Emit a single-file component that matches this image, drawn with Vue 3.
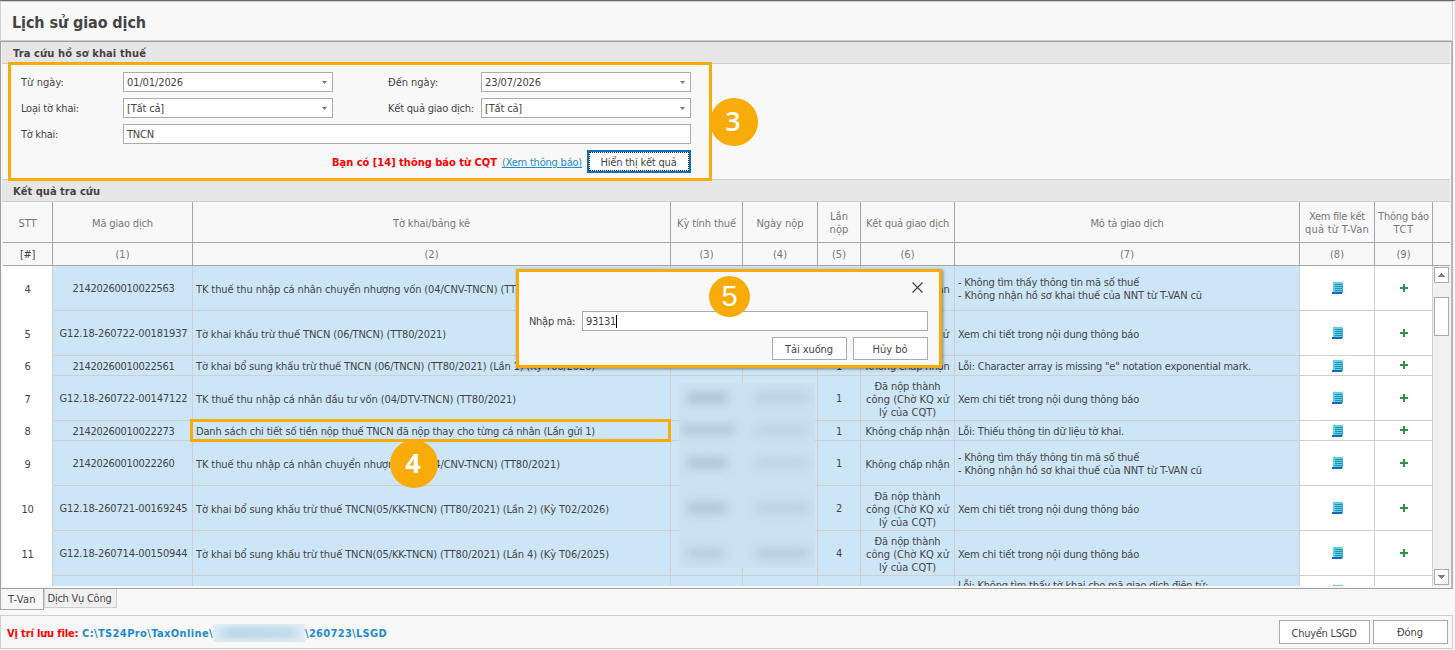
<template>
    <div class="window">
        <header class="title-bar">
            <h1 v-fit="134">Lịch sử giao dịch</h1>
        </header>

        <main class="content">
            <div class="group-header"><span v-fit="133">Tra cứu hồ sơ khai thuế</span></div>

            <section class="search">
                <div class="search-form">
                    <div class="form-row">
                        <label><span v-fit="43">Từ ngày:</span></label>
                        <div class="field">
                            <span v-fit="56">01/01/2026</span>
                            <svg class="caret" viewBox="0 0 5 3"><path d="M0 0h5L2.5 3z" /></svg>
                        </div>
                        <label class="second"><span v-fit="50">Đến ngày:</span></label>
                        <div class="field">
                            <span v-fit="56">23/07/2026</span>
                            <svg class="caret" viewBox="0 0 5 3"><path d="M0 0h5L2.5 3z" /></svg>
                        </div>
                    </div>
                    <div class="form-row">
                        <label><span v-fit="58">Loại tờ khai:</span></label>
                        <div class="field">
                            <span v-fit="37">[Tất cả]</span>
                            <svg class="caret" viewBox="0 0 5 3"><path d="M0 0h5L2.5 3z" /></svg>
                        </div>
                        <label class="second"><span v-fit="86">Kết quả giao dịch:</span></label>
                        <div class="field">
                            <span v-fit="37">[Tất cả]</span>
                            <svg class="caret" viewBox="0 0 5 3"><path d="M0 0h5L2.5 3z" /></svg>
                        </div>
                    </div>
                    <div class="form-row">
                        <label><span v-fit="37">Tờ khai:</span></label>
                        <div class="field wide"><span v-fit="27">TNCN</span></div>
                    </div>
                    <div class="form-actions">
                        <strong class="notice"><span v-fit="165">Bạn có [14] thông báo từ CQT</span></strong>
                        <a class="notice-link"><span v-fit="80">(Xem thông báo)</span></a>
                        <button class="btn-focus"><span v-fit="76">Hiển thị kết quả</span></button>
                    </div>
                </div>
            </section>

            <div class="group-header results"><span v-fit="87">Kết quả tra cứu</span></div>

            <section class="grid">
                <div class="grid-row head">
                    <div v-for="(col, i) in columns" :key="i" class="cell">
                        <span v-for="line in col" :key="line[0]" v-fit="line[1]">{{ line[0] }}</span>
                    </div>
                    <div class="cell"></div>
                </div>
                <div class="grid-row numbers">
                    <div class="cell dark"><span v-fit="15">[#]</span></div>
                    <div v-for="n in 9" :key="n" class="cell"><span v-fit="14">({{ n }})</span></div>
                    <div class="cell"></div>
                </div>

                <div class="grid-body">
                    <div class="rows">
                        <div
                            v-for="(row, i) in rows"
                            :key="i"
                            class="grid-row data"
                            :style="{ height: row.height + 'px' }"
                        >
                            <div class="cell stt"><span v-if="row.stt" v-fit="row.stt > 9 ? 12 : 6">{{ row.stt }}</span></div>
                            <div class="cell raised code"><span v-if="row.code" v-fit="row.code.length > 17 ? 128 : 102">{{ row.code }}</span></div>
                            <div class="cell left"><span v-if="row.name" v-fit="row.name[1]">{{ row.name[0] }}</span></div>
                            <div class="cell"></div>
                            <div class="cell"></div>
                            <div class="cell raised"><span v-if="row.times" v-fit="6">{{ row.times }}</span></div>
                            <div class="cell">
                                <span v-for="line in row.status" :key="line[0]" v-fit="line[1]">{{ line[0] }}</span>
                            </div>
                            <div class="cell left desc">
                                <span v-for="line in row.desc" :key="line[0]" v-fit="line[1]">{{ line[0] }}</span>
                            </div>
                            <div class="cell white">
                                <svg class="doc" viewBox="0 0 11 13">
                                    <path d="M1 1h10v11H1z" fill="#62cbe6" />
                                    <path d="M2 0h1v1H2zM10 0h1v2h-1z" fill="#a5e3f1" />
                                    <path d="M10 3h1v9h-1z" fill="#3fadd0" />
                                    <path d="M3 3h7v1H3zM3 5h7v1H3zM3 7h7v1H3zM3 9h7v1H3z" fill="#2493b4" />
                                    <path d="M0 11h10v2H0z" fill="#1769b5" />
                                </svg>
                            </div>
                            <div class="cell white">
                                <svg class="plus" viewBox="0 0 8 8"><path d="M3 0h2v3h3v2H5v3H3V5H0V3h3z" /></svg>
                            </div>
                        </div>
                    </div>
                    <div class="scrollbar">
                        <div class="scroll-btn"><svg viewBox="0 0 7 4"><path d="M3 0h1v1h1v1h1v1h1v1H0V3h1V2h1V1h1z" /></svg></div>
                        <div class="thumb"></div>
                        <div class="scroll-btn down"><svg viewBox="0 0 7 4"><path d="M0 0h7v1H6v1H5v1H4v1H3V3H2V2H1V1H0z" /></svg></div>
                    </div>
                </div>
            </section>
        </main>

        <nav class="tabs">
            <div class="tab active"><span v-fit="28">T-Van</span></div>
            <div class="tab"><span v-fit="64">Dịch Vụ Công</span></div>
        </nav>

        <footer class="footer">
            <strong class="path-label"><span v-fit="71">Vị trí lưu file:</span></strong>
            <strong class="path"><span v-fit="131">C:\TS24Pro\TaxOnline\</span><i class="masked"></i><span v-fit="82">\260723\LSGD</span></strong>
            <button class="btn transfer"><span v-fit="65">Chuyển LSGD</span></button>
            <button class="btn close"><span v-fit="26">Đóng</span></button>
        </footer>

        <!-- redacted period and date columns -->
        <div class="redacted">
            <i
                v-for="(blot, i) in blots"
                :key="i"
                class="blot"
                :style="{ top: blot.y + 'px', left: blot.x + 'px', width: blot.w + 'px', opacity: blot.o }"
            ></i>
        </div>

        <div class="dialog">
            <svg class="dialog-close" viewBox="0 0 11 11"><path d="M.5.500l10 10M10.500.500l-10 10" /></svg>
            <div class="dialog-row">
                <label><span v-fit="46">Nhập mã:</span></label>
                <div class="field"><span v-fit="30">93131</span><i class="cursor"></i></div>
            </div>
            <div class="dialog-actions">
                <button class="btn"><span v-fit="48">Tải xuống</span></button>
                <button class="btn"><span v-fit="35">Hủy bỏ</span></button>
            </div>
        </div>

        <div class="frame frame-search"></div>
        <div class="frame frame-row"></div>
        <div class="step step-3">3</div>
        <div class="step step-4">4</div>
        <div class="step step-5">5</div>
    </div>
</template>

<script setup>
// spreads the letters so that a label takes the given width
const vFit = {
    mounted(el, { value }) {
        const width = el.getBoundingClientRect().width;
        el.style.letterSpacing = `${(value - width) / el.textContent.length}px`;
    },
};

const columns = [
    [['STT', 18]],
    [['Mã giao dịch', 61]],
    [['Tờ khai/bảng kê', 77]],
    [['Kỳ tính thuế', 59]],
    [['Ngày nộp', 47]],
    [['Lần', 18], ['nộp', 19]],
    [['Kết quả giao dịch', 83]],
    [['Mô tả giao dịch', 73]],
    [['Xem file kết', 56], ['quả từ T-Van', 64]],
    [['Thông báo', 51], ['TCT', 20]],
];

const done = [['Đã nộp thành', 66], ['công (Chờ KQ xử', 83], ['lý của CQT)', 57]];
const rejected = [['Không chấp nhận', 84]];
const seeDetail = [['Xem chi tiết trong nội dung thông báo', 181]];
const notFound = [
    ['- Không tìm thấy thông tin mã số thuế', 181],
    ['- Không nhận hồ sơ khai thuế của NNT từ T-VAN cũ', 244],
];

const rows = [
    { stt: 4, height: 45, code: '21420260010022563', name: ['TK thuế thu nhập cá nhân chuyển nhượng vốn (04/CNV-TNCN) (TT80/2021)', 364], times: 1, status: rejected, desc: notFound },
    { stt: 5, height: 45, code: 'G12.18-260722-00181937', name: ['Tờ khai khấu trừ thuế TNCN (06/TNCN) (TT80/2021)', 250], times: 1, status: done, desc: seeDetail },
    { stt: 6, height: 20, code: '21420260010022561', name: ['Tờ khai bổ sung khấu trừ thuế TNCN (06/TNCN) (TT80/2021) (Lần 1) (Kỳ T06/2026)', 399], times: 1, status: rejected, desc: [['Lỗi: Character array is missing "e" notation exponential mark.', 293]] },
    { stt: 7, height: 45, code: 'G12.18-260722-00147122', name: ['TK thuế thu nhập cá nhân đầu tư vốn (04/DTV-TNCN) (TT80/2021)', 320], times: 1, status: done, desc: seeDetail },
    { stt: 8, height: 20, code: '21420260010022273', name: ['Danh sách chi tiết số tiền nộp thuế TNCN đã nộp thay cho từng cá nhân (Lần gửi 1)', 399], times: 1, status: rejected, desc: [['Lỗi: Thiếu thông tin dữ liệu tờ khai.', 166]] },
    { stt: 9, height: 45, code: '21420260010022260', name: ['TK thuế thu nhập cá nhân chuyển nhượng vốn (04/CNV-TNCN) (TT80/2021)', 364], times: 1, status: rejected, desc: notFound },
    { stt: 10, height: 45, code: 'G12.18-260721-00169245', name: ['Tờ khai bổ sung khấu trừ thuế TNCN(05/KK-TNCN) (TT80/2021) (Lần 2) (Kỳ T02/2026)', 413], times: 2, status: done, desc: seeDetail },
    { stt: 11, height: 45, code: 'G12.18-260714-00150944', name: ['Tờ khai bổ sung khấu trừ thuế TNCN(05/KK-TNCN) (TT80/2021) (Lần 4) (Kỳ T06/2025)', 413], times: 4, status: done, desc: seeDetail },
    { height: 30, desc: [['Lỗi: Không tìm thấy tờ khai cho mã giao dịch điện tử:', 250], ['\u00a0', 3]] },
];

const blots = [
    { x: 8, y: 9, w: 40, o: 0.65 },
    { x: 2, y: 41, w: 54, o: 0.5 },
    { x: 8, y: 74, w: 40, o: 0.6 },
    { x: 8, y: 119, w: 40, o: 0.6 },
    { x: 8, y: 164, w: 38, o: 0.45 },
    { x: 76, y: 9, w: 54, o: 0.35 },
    { x: 76, y: 41, w: 54, o: 0.3 },
    { x: 76, y: 74, w: 54, o: 0.3 },
    { x: 76, y: 119, w: 54, o: 0.35 },
    { x: 76, y: 164, w: 54, o: 0.45 },
];
</script>

<style>
body {
    margin: 0;
    overflow: hidden;
}
</style>

<style scoped>
* {
    box-sizing: border-box;
}

.window {
    position: relative;
    display: flex;
    flex-direction: column;
    width: 1455px;
    height: 650px;
    overflow: hidden;
    background: #f8f8f8;
    border-top: 1px solid #6a6a6a;
    color: #444;
    font-family: "DejaVu Sans Condensed", "DejaVu Sans", sans-serif;
    font-stretch: condensed;
    font-size: 11px;
    line-height: 13px;
    white-space: nowrap;
}

.title-bar {
    display: flex;
    align-items: center;
    width: 1453px;
    height: 40px;
    padding: 4px 0 0 11px;
    border: 1px solid #d0d0d0;
}

h1 {
    margin: 0;
    font-size: 16px;
    line-height: 20px;
    font-weight: bold;
}

.content {
    width: 1453px;
    height: 548px;
    padding: 0 1px;
    background: #f8f8f8;
    border: 1px solid #9f9f9f;
    border-width: 1px 2px 1px 1px;
    border-right-color: #b4b4b4;
}

.group-header {
    display: flex;
    align-items: center;
    height: 22px;
    padding: 1px 0 0 11px;
    background: #e6e6e6;
    border-bottom: 1px solid #cfcfcf;
    font-weight: bold;
}

.group-header.results {
    height: 23px;
    border-top: 1px solid #cfcfcf;
}

.search {
    height: 115px;
    padding: 8px 0 0 19px;
}

.search-form {
    display: flex;
    flex-direction: column;
    gap: 6px;
    width: 670px;
}

.form-row {
    display: flex;
    align-items: center;
    height: 20px;
}

.form-row label {
    width: 102px;
}

.form-row label.second {
    width: 148px;
    padding-left: 55px;
}

.field {
    display: flex;
    align-items: center;
    width: 210px;
    height: 20px;
    padding: 0 5px 0 3px;
    background: #fff;
    border: 1px solid #ababab;
}

.field.wide {
    width: 568px;
}

.caret {
    width: 5px;
    height: 3px;
    margin-left: auto;
    fill: #777;
}

.form-actions {
    display: flex;
    align-items: center;
    justify-content: flex-end;
    height: 23px;
}

.notice {
    margin-right: 5px;
    padding-top: 2px;
    color: #f00;
}

.notice-link {
    margin-right: 5px;
    padding-top: 2px;
    color: #1e8bcd;
    text-decoration: underline;
}

button {
    display: flex;
    align-items: center;
    justify-content: center;
    padding: 1px 1px 0 0;
    background: #fff;
    border: 1px solid #ababab;
    border-radius: 0;
    color: #444;
    font: inherit;
}

.btn-focus {
    width: 104px;
    height: 23px;
    padding: 2px 1px 0 0;
    border: 2px solid #106ebe;
    outline: 1px dotted #333;
    outline-offset: -3px;
}

.grid {
    margin-left: 1px;
}

.grid-row {
    display: grid;
    grid-template-columns: 50px 140px 478px 72px 75px 43px 94px 345px 75px 58px 17px;
}

.grid-row.head {
    height: 41px;
}

.grid-row.numbers {
    height: 23px;
}

.cell {
    display: flex;
    flex-direction: column;
    align-items: center;
    justify-content: center;
    min-width: 0;
    border-right: 1px solid #cfcfcf;
    border-bottom: 1px solid #cfcfcf;
    overflow: hidden;
}

.head .cell,
.numbers .cell {
    border-color: #a6a6a6;
    color: #777;
}

.head .cell {
    padding-top: 2px;
}

.head .cell:last-child,
.numbers .cell:last-child {
    border-right: none;
}

.numbers .cell.dark {
    color: #444;
}

.grid-body {
    display: flex;
    height: 320px;
    overflow: hidden;
}

.data {
    grid-template-columns: 50px 140px 478px 72px 75px 43px 94px 345px 75px 58px;
}

.data .cell {
    padding-top: 2px;
    background: #cde6f7;
}

.data .cell.raised {
    padding-top: 1px;
}

.data .cell.code {
    padding-left: 2px;
}

.data .cell.left {
    align-items: flex-start;
    padding-left: 3px;
}

.data .cell.white {
    padding-top: 0;
    padding-bottom: 1px;
    background: #fff;
}

.data .cell.stt {
    background: #fff;
    border-bottom-color: #fff;
}

.doc {
    width: 11px;
    height: 13px;
    flex: none;
    margin-left: 1px;
}

.plus {
    width: 8px;
    height: 8px;
    flex: none;
    margin-left: 1px;
    fill: #2f9147;
}

.scrollbar {
    display: flex;
    flex-direction: column;
    width: 17px;
    padding: 1px;
    background: #f0f0f0;
}

.scroll-btn {
    display: flex;
    align-items: center;
    justify-content: center;
    width: 15px;
    height: 16px;
    background: #fff;
    border: 1px solid #ababab;
}

.scroll-btn svg {
    width: 7px;
    height: 4px;
    fill: #808080;
}

.scroll-btn.down {
    margin-top: auto;
}

.thumb {
    width: 15px;
    height: 39px;
    margin-top: 14px;
    background: #fff;
    border: 1px solid #ababab;
}

.tabs {
    display: flex;
    align-items: flex-start;
    height: 26px;
}

.tab {
    display: flex;
    align-items: center;
    justify-content: center;
    width: 73px;
    height: 19px;
    padding-right: 2px;
    background: #f0f0f0;
    border: 1px solid #cfcfcf;
    border-top: none;
}

.tab.active {
    width: 44px;
    height: 21px;
    padding-right: 0;
    background: #f8f8f8;
    border-color: #ababab;
}

.footer {
    display: flex;
    align-items: center;
    width: 1453px;
    height: 34px;
    padding: 0 4px 0 6px;
    border: 1px solid #cfcfcf;
}

.path-label,
.path {
    padding-top: 2px;
}

.path-label {
    width: 75px;
    color: #f00;
}

.path {
    display: flex;
    align-items: center;
    color: #1e8bcd;
}

.masked {
    width: 92px;
    height: 18px;
    background: linear-gradient(90deg, #dcebf3, #bcd9ea 20%, #c0dbeb 80%, #dcebf3);
    box-shadow: inset 0 0 5px 3px #e2edf3;
}

.btn.transfer {
    width: 91px;
    height: 24px;
    margin-left: auto;
    padding-top: 3px;
}

.btn.close {
    width: 75px;
    height: 24px;
    margin-left: 3px;
}

.redacted {
    position: absolute;
    left: 679px;
    top: 382px;
    width: 136px;
    height: 185px;
    overflow: hidden;
    background: #cae2f2;
}

.blot {
    position: absolute;
    height: 12px;
    background: #9fb6c7;
    filter: blur(5px);
}

.dialog {
    position: absolute;
    left: 516px;
    top: 268px;
    width: 426px;
    height: 99px;
    padding: 39px 11px 0 10px;
    background: #f8f8f8;
    border: 3px solid #f9ab0a;
    box-shadow: 1px 1px 3px rgba(0, 0, 0, 0.45);
}

.dialog-close {
    position: absolute;
    right: 16px;
    top: 10px;
    width: 11px;
    height: 11px;
    stroke: #444;
    stroke-width: 1.2;
}

.dialog-row {
    display: flex;
    align-items: center;
}

.dialog-row label {
    width: 53px;
}

.dialog-row .field {
    width: 346px;
}

.cursor {
    width: 1px;
    height: 13px;
    background: #000;
}

.dialog-actions {
    display: flex;
    justify-content: flex-end;
    gap: 6px;
    margin-top: 6px;
}

.dialog-actions .btn {
    width: 75px;
    height: 23px;
}

.frame {
    position: absolute;
    border: 3px solid #f9ab0a;
}

.frame-search {
    left: 8px;
    top: 61px;
    width: 704px;
    height: 119px;
}

.frame-row {
    left: 190px;
    top: 418px;
    width: 481px;
    height: 23px;
}

.step {
    position: absolute;
    display: flex;
    align-items: center;
    justify-content: center;
    width: 48px;
    height: 48px;
    padding-bottom: 3px;
    border-radius: 50%;
    background: #f9ab0a;
    color: #fff;
    font-family: "Open Sans", sans-serif;
    font-stretch: normal;
    font-size: 27px;
    font-weight: 600;
}

.step-3 {
    left: 710px;
    top: 97px;
    padding-right: 2px;
}

.step-4 {
    left: 390px;
    top: 439px;
    padding-right: 2px;
    font-weight: 700;
}

.step-5 {
    left: 709px;
    top: 275px;
    width: 41px;
    height: 41px;
    padding-bottom: 0;
    font-family: "Liberation Sans", Arial, sans-serif;
    font-size: 29px;
    font-weight: 400;
}
</style>
